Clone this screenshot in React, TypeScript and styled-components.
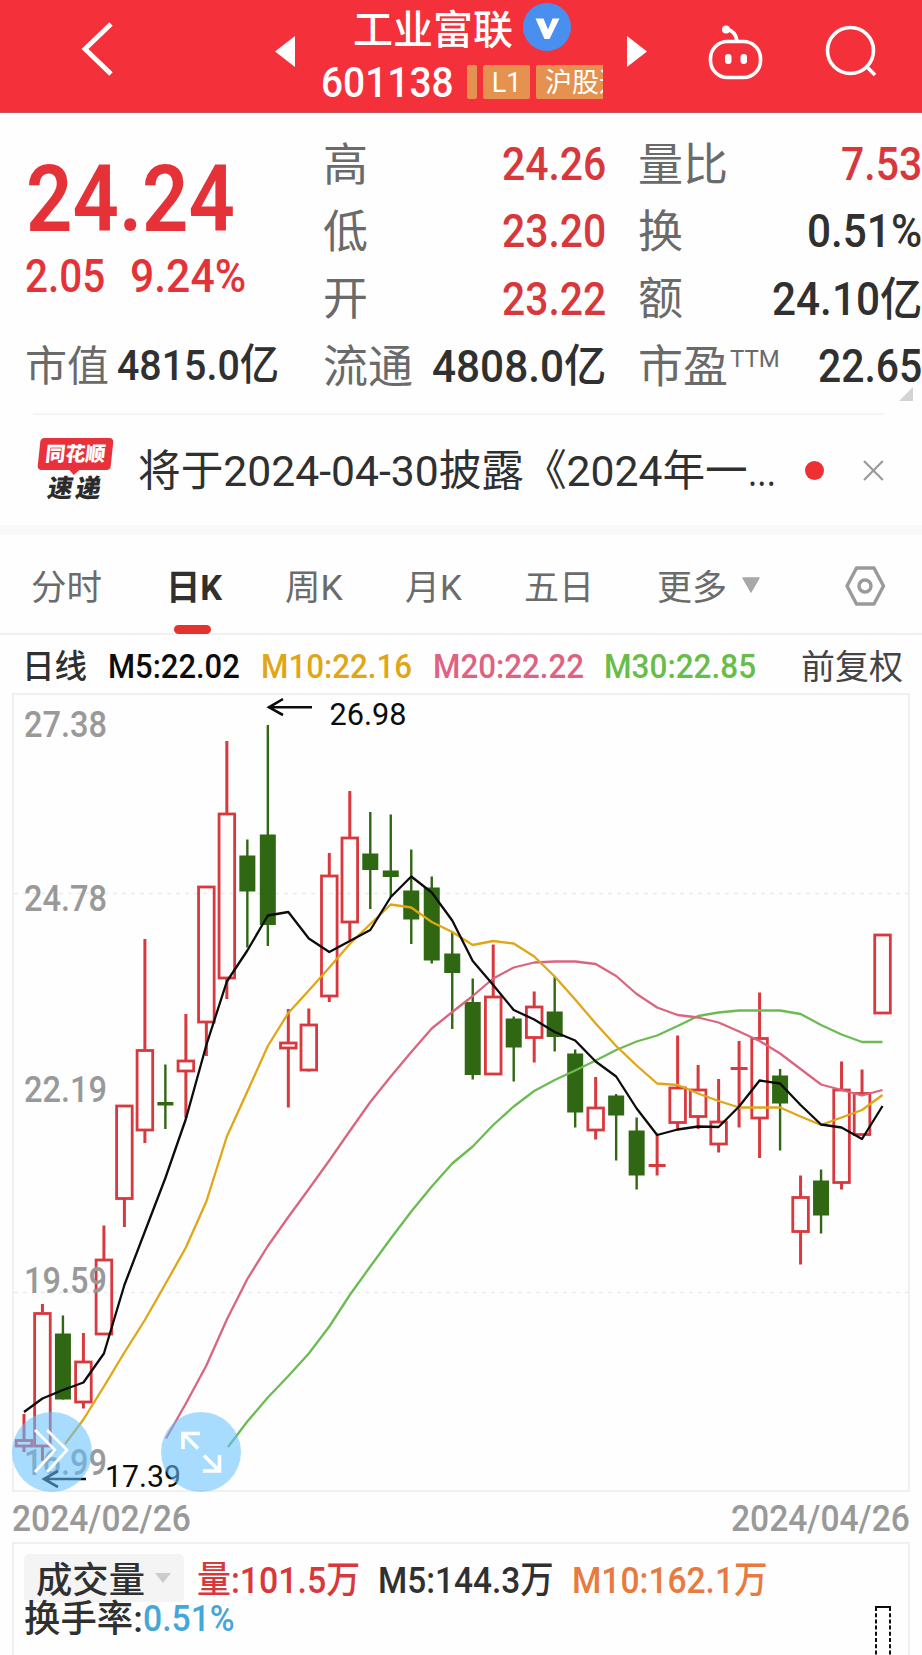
import React, { useLayoutEffect, useRef, useState } from 'react';
import styled, { createGlobalStyle } from 'styled-components';

const GlobalStyle = createGlobalStyle`
  * { box-sizing: border-box; }
  body {
    margin: 0;
    background: #fefefe;
    font-family: Roboto, "Noto Sans CJK SC", sans-serif;
    color: #303030;
  }
`;

const Page = styled.main`
  width: 922px;
  height: 1655px;
  overflow: hidden;
  background: #fefefe;
  display: flex;
  flex-direction: column;
`;

/* Text condensed or widened horizontally to fill a given width. */
const FitBox = styled.span<{ $w: number; $size: number; $weight: number; $drop: number; $color?: string }>`
  display: block;
  flex: none;
  width: ${(p) => p.$w}px;
  height: 1.2em;
  margin-top: ${(p) => p.$drop}px;
  margin-bottom: ${(p) => -p.$drop}px;
  line-height: 1.2;
  font-size: ${(p) => p.$size}px;
  font-weight: ${(p) => p.$weight};
  color: ${(p) => p.$color ?? 'inherit'};
  white-space: nowrap;
`;

const FitInner = styled.span`
  display: inline-block;
  line-height: 1.2;
  vertical-align: top;
  transform-origin: 0 50%;
`;

interface FitProps {
  w: number;
  size: number;
  weight?: number;
  drop?: number;
  color?: string;
  children: React.ReactNode;
}

function Fit({ w, size, weight = 400, drop = 0, color, children }: FitProps) {
  const ref = useRef<HTMLSpanElement>(null);
  const [scale, setScale] = useState(1);
  useLayoutEffect(() => {
    if (ref.current) setScale(w / ref.current.offsetWidth);
  }, [w, size, weight]);
  return (
    <FitBox $w={w} $size={size} $weight={weight} $drop={drop} $color={color}>
      <FitInner ref={ref} style={{ transform: `scaleX(${scale})` }}>
        {children}
      </FitInner>
    </FitBox>
  );
}

const RED = '#e53238';
const INK = '#303030';

/* ---------- header ---------- */

const Header = styled.header`
  height: 113px;
  flex: none;
  background: #f4303a;
  border-bottom: 1px solid #c9525a;
  color: #fff;
  display: flex;
  align-items: flex-start;
`;

const HeaderIcon = styled.svg<{ $ml: number; $mt: number }>`
  flex: none;
  display: block;
  margin-left: ${(p) => p.$ml}px;
  margin-top: ${(p) => p.$mt}px;
`;

const TitleBlock = styled.div`
  width: 283px;
  flex: none;
  margin-left: 25px;
`;

const TitleRow = styled.div`
  display: flex;
  align-items: center;
  height: 54px;
  padding: 0 0 0 32px;
  gap: 10px;
`;

const StockName = styled.h1`
  margin: 0;
  padding-top: 7px;
  font-size: 40px;
  line-height: 54px;
  font-weight: 500;
  white-space: nowrap;
`;

const CodeRow = styled.div`
  display: flex;
  align-items: center;
  height: 56px;
`;

const Tags = styled.div`
  display: flex;
  gap: 6px;
  margin-left: 13px;
  width: 136px;
  overflow: hidden;
`;

const Tag = styled.span<{ $w: number }>`
  flex: none;
  width: ${(p) => p.$w}px;
  height: 34px;
  line-height: 36px;
  border-radius: 2px;
  background: #e5914f;
  font-size: 27px;
  display: flex;
  justify-content: center;
  white-space: nowrap;
`;

const ClippedTag = styled(Tag)`
  border-radius: 2px 0 0 2px;
  justify-content: flex-start;
  padding-left: 9px;
  overflow: hidden;
`;

/* ---------- quote ---------- */

const Quote = styled.section`
  position: relative;
  flex: none;
  height: 300px;
  padding: 17px 0 0 25px;
  display: grid;
  grid-template-columns: 298px 315px 284px;
`;

const PriceColumn = styled.div`
  display: flex;
  flex-direction: column;
`;

const Price = styled.div`
  padding: 14px 0 0 1px;
  height: 119px;
`;

const Change = styled.div`
  display: flex;
  gap: 25px;
  height: 82px;
`;

const Column = styled.div<{ $pr: number }>`
  display: flex;
  flex-direction: column;
  padding-right: ${(p) => p.$pr}px;
`;

const Row = styled.div`
  height: 67.3px;
  display: flex;
  align-items: center;
  justify-content: space-between;
`;

const CapRow = styled(Row)`
  width: 254px;
`;

const Label = styled.span<{ $size?: number }>`
  padding-top: 4px;
  font-size: ${(p) => p.$size ?? 45}px;
  line-height: 60px;
  font-weight: 400;
  color: #6a6a6a;
  display: flex;
  white-space: nowrap;
`;

const Sup = styled.span`
  font-size: 24px;
  line-height: 43px;
  margin-left: 2px;
`;

const Corner = styled.svg`
  position: absolute;
  right: 9px;
  bottom: 12px;
`;

/* ---------- news ---------- */

const News = styled.section`
  flex: none;
  height: 112px;
  margin: 0 38px 0 33px;
  border-top: 2px solid #f4f4f4;
  display: flex;
  align-items: center;
`;

const Brand = styled.div`
  width: 76px;
  height: 64px;
  margin: 0 25px 0 5px;
  display: flex;
  flex-direction: column;
  align-items: center;
`;

const BrandTop = styled.div`
  position: relative;
  width: 73px;
  height: 32px;
  line-height: 33px;
  border-radius: 4px;
  background: #e8313a;
  color: #fff;
  font-size: 20px;
  font-weight: 900;
  text-align: center;
  transform: skewX(-6deg);
  &::after {
    content: '';
    position: absolute;
    left: 31px;
    top: 31px;
    border: 6px solid transparent;
    border-top-color: #e8313a;
    border-bottom: 0;
  }
`;

const BrandBottom = styled.div`
  font-size: 25px;
  line-height: 28px;
  margin-top: 5px;
  font-weight: 900;
  letter-spacing: 3px;
  color: #2b2b2b;
  transform: skewX(-10deg);
`;

const Dot = styled.i`
  width: 19px;
  height: 19px;
  border-radius: 50%;
  background: #ee3033;
  margin-left: 29px;
`;

const Close = styled.svg`
  display: block;
  margin-left: 39px;
`;

const Band = styled.div`
  flex: none;
  height: 10px;
  background: #f8f8f8;
`;

/* ---------- tabs ---------- */

const Tabs = styled.nav`
  flex: none;
  height: 100px;
  border-bottom: 2px solid #f0f0f0;
  display: flex;
  color: #6b6b6b;
`;

const Tab = styled.div<{ $ml: number; $active?: boolean }>`
  position: relative;
  margin-left: ${(p) => p.$ml}px;
  height: 102px;
  padding-top: 32px;
  color: ${(p) => (p.$active ? INK : 'inherit')};
  &::after {
    content: '';
    display: ${(p) => (p.$active ? 'block' : 'none')};
    position: absolute;
    left: 8px;
    top: 90px;
    width: 37px;
    height: 9px;
    border-radius: 5px;
    background: #e4322f;
  }
`;

const TabIcon = styled.svg<{ $ml: number; $mt: number }>`
  margin-left: ${(p) => p.$ml}px;
  margin-top: ${(p) => p.$mt}px;
  flex: none;
`;

/* ---------- chart ---------- */

const Legend = styled.div`
  flex: none;
  height: 58px;
  padding: 5px 0 0 22px;
  display: flex;
  align-items: center;
`;

const LegendGap = styled.i<{ $w: number }>`
  width: ${(p) => p.$w}px;
  flex: none;
`;

const ChartPane = styled.section`
  position: relative;
  flex: none;
  width: 898px;
  height: 799px;
  margin-left: 12px;
  border: 2px solid #f0f0f0;
`;

const Plot = styled.svg`
  display: block;
  margin: -2px;
  font-family: Roboto, sans-serif;
`;

const Bubble = styled.button<{ $left: number }>`
  position: absolute;
  left: ${(p) => p.$left}px;
  bottom: -2px;
  width: 80px;
  height: 80px;
  padding: 0;
  border: 0;
  border-radius: 50%;
  background: rgba(100, 193, 255, 0.56);
  svg { display: block; }
`;

const Dates = styled.div`
  flex: none;
  height: 50px;
  padding: 2px 12px 0 12px;
  display: flex;
  justify-content: space-between;
  align-items: center;
`;

const Volume = styled.section`
  flex: none;
  width: 898px;
  height: 120px;
  margin-left: 12px;
  border: 2px solid #f0f0f0;
  padding: 10px 0 0 10px;
  display: grid;
  grid-template-columns: 1fr 35px;
`;

const VolumeRow = styled.div`
  display: flex;
  align-items: center;
  height: 48px;
`;

const TurnoverRow = styled.div`
  display: flex;
  align-items: center;
  height: 34px;
`;

const Chip = styled.div`
  width: 160px;
  height: 48px;
  flex: none;
  border-radius: 5px;
  background: #f4f4f4;
  padding-left: 12px;
  display: flex;
  align-items: center;
  gap: 10px;
`;

const VolumeBar = styled.svg`
  display: block;
  margin-top: 50px;
`;

/* [rising, high, body top, body bottom, low] in the plot's vertical units */
type Candle = [boolean, number, number, number, number];
const U = true;
const D = false;
const candles: Candle[] = [
  [U, 1414, 1439.5, 1446, 1452], [U, 1304, 1312.5, 1446, 1461], [D, 1315.5, 1333.5, 1399.5, 1399.5],
  [U, 1333, 1361, 1402, 1408.5], [U, 1225.5, 1259, 1334, 1334], [U, 1105, 1105, 1198.5, 1227],
  [U, 939, 1049.5, 1130, 1143], [D, 1064.5, 1102, 1105.5, 1129], [U, 1014, 1060, 1071, 1118],
  [U, 886, 886, 1022, 1056], [U, 741, 813, 978, 999], [D, 839.5, 855.5, 891.5, 947.5],
  [D, 725, 834.5, 925, 946], [U, 1009, 1042, 1048, 1107.5], [U, 1008.5, 1024, 1070, 1071.5],
  [U, 853, 875, 996, 1002], [U, 791, 837, 922, 940], [D, 812, 853.5, 870, 909],
  [D, 814.5, 870.5, 877, 897], [D, 849.5, 890.5, 919.5, 944], [D, 876.5, 887.5, 960.5, 963.5],
  [D, 931.5, 953.5, 973, 1029], [D, 978.5, 1002, 1075, 1079.5], [U, 944.5, 996, 1074, 1074],
  [D, 1016.5, 1018.5, 1047.5, 1081.5], [U, 991.5, 1006, 1037.5, 1062.5], [D, 976.5, 1011.5, 1037, 1051.5],
  [D, 1049.5, 1053.5, 1112.5, 1127.5], [U, 1077, 1107, 1130, 1139.5], [D, 1094, 1095.5, 1115.5, 1160.5],
  [D, 1117.5, 1130.5, 1175.5, 1189.5], [U, 1135, 1165.5, 1165.5, 1175.5], [U, 1035.5, 1087, 1122.5, 1130.5],
  [U, 1065, 1089, 1116.5, 1129], [U, 1079, 1121, 1144, 1152.5], [U, 1041, 1068.5, 1068.5, 1127.5],
  [U, 992.5, 1037.5, 1118, 1158], [D, 1069, 1075.5, 1103.5, 1150.5], [U, 1175.5, 1196.5, 1231.5, 1264.5],
  [D, 1169.5, 1180.5, 1215.5, 1233.5], [U, 1061.5, 1089, 1182.5, 1189.5], [U, 1069.5, 1092.5, 1134.5, 1134.5],
  [U, 934, 934, 1013, 1014],
];

const xAt = (i: number) => (i === 0 ? 24 : 124.4 + 20.49 * (i - 5));

interface Average { color: string; from: number; head?: [number, number]; ys: number[] }
const averages: Average[] = [
  {
    color: '#6cbb52', from: 11, head: [228, 1447],
    ys: [1421.5, 1397.5, 1376, 1353.5, 1326.5, 1295, 1266.5, 1238.5, 1211.5, 1186.5, 1163.5, 1146.5, 1125, 1106.5, 1091, 1080, 1070.5, 1060.5, 1050, 1041.5, 1035.5, 1026, 1016, 1012.5, 1010.5, 1010.5, 1010.5, 1014, 1025, 1034.5, 1042, 1042],
  },
  {
    color: '#d9657f', from: 8, head: [166, 1438.5],
    ys: [1403.5, 1365.5, 1319.5, 1279, 1246, 1217, 1189, 1160.5, 1131, 1102, 1076.5, 1052, 1028.5, 1012, 996, 978.5, 967.5, 962.5, 961.5, 961.5, 964, 976, 994, 1007.5, 1015, 1017.5, 1022.5, 1031.5, 1041, 1053.5, 1069, 1084.5, 1090, 1095.5, 1090],
  },
  {
    color: '#dfa616', from: 3, head: [65, 1444],
    ys: [1419.5, 1386.5, 1352.5, 1320, 1284, 1247.5, 1201.5, 1136.5, 1091.5, 1046, 1013, 990.5, 967.5, 944, 924, 904.5, 907.5, 922, 932, 945, 941, 943.5, 956.5, 976.5, 999.5, 1023.5, 1046, 1065.5, 1083.5, 1085, 1093.5, 1101, 1107.5, 1107.5, 1107.5, 1116.5, 1125, 1117.5, 1110, 1095],
  },
  {
    color: '#0c0c0c', from: 0,
    ys: [1412, 1398.5, 1390, 1382.5, 1353.5, 1285, 1231.5, 1178, 1119, 1045, 981.5, 950.5, 915.5, 912, 938.5, 952, 941, 930, 897, 876.5, 892.5, 920.5, 961, 985, 1010, 1019.5, 1032, 1040.5, 1061.5, 1076.5, 1108.5, 1135, 1129.5, 1126.5, 1127, 1106.5, 1080.5, 1083.5, 1105, 1124.5, 1127.5, 1139, 1106],
  },
];

const axis: [string, number][] = [
  ['27.38', 737], ['24.78', 911], ['22.19', 1102], ['19.59', 1293], ['16.99', 1475],
];

function CandleShape({ i, c }: { i: number; c: Candle }) {
  const [up, high, top, bottom, low] = c;
  const x = xAt(i);
  const color = up ? '#d8393f' : '#2f6712';
  if (!up) {
    return (
      <g>
        <path d={`M${x} ${high}V${low}`} stroke={color} strokeWidth={2.4} />
        <rect x={x - 8} y={top} width={16} height={bottom - top} fill={color} />
      </g>
    );
  }
  if (top === bottom) {
    return <path d={`M${x} ${high}V${low}M${x - 8.5} ${top}h17`} stroke={color} strokeWidth={3} fill="none" />;
  }
  return (
    <g stroke={color} fill="none">
      <path d={`M${x} ${high}V${top}M${x} ${bottom}V${low}`} strokeWidth={3} />
      <rect x={x - 7.8} y={top + 1} width={15.6} height={bottom - top - 1} strokeWidth={2.8} />
    </g>
  );
}

function Chart() {
  return (
    <ChartPane>
      <Plot width={898} height={799} viewBox="12 693 898 799">
        <path d="M14 893.5H908M14 1292.5H908" stroke="#ececec" strokeWidth={1.6} strokeDasharray="4 5" />
        {candles.map((c, i) => <CandleShape key={i} i={i} c={c} />)}
        {axis.map(([t, y]) => (
          <text key={t} x={24} y={y} fontSize={36.5} fill="#999" fontWeight={500} textLength={83} lengthAdjust="spacingAndGlyphs">{t}</text>
        ))}
        {averages.map((a) => (
          <polyline
            key={a.color}
            fill="none"
            stroke={a.color}
            strokeWidth={2.3}
            strokeLinejoin="round"
            points={[...(a.head ? [a.head] : []), ...a.ys.map((y, k) => [xAt(a.from + k), y])]
              .map((p) => p.join(',')).join(' ')}
          />
        ))}
        <g stroke="#0c0c0c" strokeWidth={2.6} fill="none">
          <path d="M312 707.3H269M283 699L269 707.3L283 715" />
          <path d="M86 1479H44M58 1471L44 1479L58 1487" />
        </g>
        <g fill="#0c0c0c" fontSize={30.5}>
          <text x={329.5} y={725} textLength={77} lengthAdjust="spacingAndGlyphs">26.98</text>
          <text x={105} y={1486.5} textLength={76} lengthAdjust="spacingAndGlyphs">17.39</text>
        </g>
      </Plot>
      <Bubble $left={-2} aria-label="展开">
        <svg width="80" height="80" viewBox="0 0 80 80" fill="none" stroke="#fff" strokeWidth="2.8">
          <path d="M23 18L43 38L23 60M35 18L55 38L35 60" />
        </svg>
      </Bubble>
      <Bubble $left={146.5} aria-label="全屏">
        <svg width="80" height="80" viewBox="0 0 80 80" fill="none" stroke="#fff" strokeWidth="3.6">
          <path d="M37 36.5L22 21.5M39 21.5H22V37M43 43.5L58 58.5M42 59H58.5V43" />
        </svg>
      </Bubble>
    </ChartPane>
  );
}

export default function App() {
  return (
    <Page>
      <GlobalStyle />
      <Header>
        <HeaderIcon $ml={78} $mt={18} width="40" height="62" viewBox="0 0 40 62" fill="none" stroke="#fff" strokeWidth="4.8">
          <path d="M33 6L7 31L33 56" />
        </HeaderIcon>
        <HeaderIcon $ml={157} $mt={36} width="21" height="31" viewBox="0 0 21 31">
          <path d="M20 0V31L0 15.5Z" fill="#fff" />
        </HeaderIcon>
        <TitleBlock>
          <TitleRow>
            <StockName>工业富联</StockName>
            <svg width="48" height="50" viewBox="0 0 48 50">
              <circle cx="24" cy="25" r="24" fill="#488ff0" />
              <path d="M12.5 16.5H20.5L25 27.5L29.5 16.5H36.5L26.5 37H21.5Z" fill="#fff" />
            </svg>
          </TitleRow>
          <CodeRow>
            <Fit w={133} size={43} weight={500} drop={1}>601138</Fit>
            <Tags>
              <Tag $w={10} />
              <Tag $w={47}>L1</Tag>
              <ClippedTag $w={68}>沪股通</ClippedTag>
            </Tags>
          </CodeRow>
        </TitleBlock>
        <HeaderIcon $ml={23} $mt={36} width="21" height="31" viewBox="0 0 21 31">
          <path d="M0 0V31L20 15.5Z" fill="#fff" />
        </HeaderIcon>
        <HeaderIcon $ml={58} $mt={22} width="60" height="60" viewBox="0 0 60 60" fill="none" stroke="#fff" strokeWidth="3.6">
          <rect x="4.5" y="19.5" width="50" height="36" rx="17" />
          <path d="M20 7C26 8 30 12 31 19" />
          <circle cx="20" cy="7.5" r="4" fill="#fff" stroke="none" />
          <rect x="19" y="32" width="6.5" height="10" rx="3" fill="#fff" stroke="none" />
          <rect x="34.5" y="32" width="6.5" height="10" rx="3" fill="#fff" stroke="none" />
        </HeaderIcon>
        <HeaderIcon $ml={57} $mt={22} width="60" height="60" viewBox="0 0 60 60" fill="none" stroke="#fff" strokeWidth="3.6">
          <circle cx="27.5" cy="28.5" r="23" />
          <path d="M43.5 44.5L52 53" />
        </HeaderIcon>
      </Header>

      <Quote>
        <PriceColumn>
          <Price><Fit w={209} size={93} weight={600} color={RED}>24.24</Fit></Price>
          <Change>
            <Fit w={80} size={46} weight={500} color={RED}>2.05</Fit>
            <Fit w={116} size={46} weight={500} color={RED}>9.24%</Fit>
          </Change>
          <CapRow>
            <Label $size={42}>市值</Label>
            <Fit w={162} size={43} weight={500} drop={1}>4815.0亿</Fit>
          </CapRow>
        </PriceColumn>
        <Column $pr={32}>
          <Row><Label>高</Label><Fit w={104} size={46} weight={500} drop={1} color="#d8383c">24.26</Fit></Row>
          <Row><Label>低</Label><Fit w={104} size={46} weight={500} drop={1} color="#d8383c">23.20</Fit></Row>
          <Row><Label>开</Label><Fit w={104} size={46} weight={500} drop={1} color="#d8383c">23.22</Fit></Row>
          <Row><Label>流通</Label><Fit w={174} size={45} weight={500} drop={1}>4808.0亿</Fit></Row>
        </Column>
        <Column $pr={0}>
          <Row><Label>量比</Label><Fit w={81} size={46} weight={500} drop={1} color="#d8383c">7.53</Fit></Row>
          <Row><Label>换</Label><Fit w={115} size={46} weight={500} drop={1}>0.51%</Fit></Row>
          <Row><Label>额</Label><Fit w={150} size={46} weight={500} drop={1}>24.10亿</Fit></Row>
          <Row><Label>市盈<Sup>TTM</Sup></Label><Fit w={104} size={46} weight={500} drop={1}>22.65</Fit></Row>
        </Column>
        <Corner width="14" height="14" viewBox="0 0 14 14"><path d="M14 0V14H0Z" fill="#d4d4d4" /></Corner>
      </Quote>

      <News>
        <Brand>
          <BrandTop>同花顺</BrandTop>
          <BrandBottom>速递</BrandBottom>
        </Brand>
        <Fit w={610} size={43} drop={2}>将于2024-04-30披露《2024年一</Fit>
        <Fit w={28} size={43} drop={2}>...</Fit>
        <Dot />
        <Close width="21" height="21" viewBox="0 0 21 21" stroke="#999" strokeWidth="2.2">
          <path d="M1 1L20 20M20 1L1 20" />
        </Close>
      </News>
      <Band />

      <Tabs>
        <Tab $ml={31}><Fit w={71} size={35.5}>分时</Fit></Tab>
        <Tab $ml={64} $active><Fit w={56} size={35.5} weight={700}>日K</Fit></Tab>
        <Tab $ml={63}><Fit w={58} size={35.5}>周K</Fit></Tab>
        <Tab $ml={62}><Fit w={57} size={35.5}>月K</Fit></Tab>
        <Tab $ml={62}><Fit w={70} size={35.5}>五日</Fit></Tab>
        <Tab $ml={63}><Fit w={70} size={35.5}>更多</Fit></Tab>
        <TabIcon $ml={15} $mt={42} width="18" height="17" viewBox="0 0 18 17">
          <path d="M1 1H17L9 15Z" fill="#a8a8a8" stroke="#a8a8a8" strokeWidth="1.5" strokeLinejoin="round" />
        </TabIcon>
        <TabIcon $ml={83} $mt={29} width="44" height="44" viewBox="0 0 44 44" fill="none" stroke="#9a9a9a" strokeWidth="3.4" strokeLinejoin="round">
          <path d="M13.5 4H31L40.5 22L31 40H13.5L4 22Z" />
          <circle cx="22" cy="22" r="6" />
        </TabIcon>
      </Tabs>

      <Legend>
        <Fit w={65} size={32.5} weight={500} drop={1}>日线</Fit>
        <LegendGap $w={21} />
        <Fit w={132} size={34} weight={500} color="#0c0c0c">M5:22.02</Fit>
        <LegendGap $w={21} />
        <Fit w={151} size={34} weight={500} color="#dfa616">M10:22.16</Fit>
        <LegendGap $w={21} />
        <Fit w={151} size={34} weight={500} color="#dd6380">M20:22.22</Fit>
        <LegendGap $w={20} />
        <Fit w={152} size={34} weight={500} color="#68bd48">M30:22.85</Fit>
        <LegendGap $w={45} />
        <Fit w={102} size={34} drop={1} color="#444">前复权</Fit>
      </Legend>

      <Chart />

      <Dates>
        <Fit w={179} size={37.5} weight={500} color="#999">2024/02/26</Fit>
        <Fit w={179} size={37.5} weight={500} color="#999">2024/04/26</Fit>
      </Dates>

      <Volume>
        <div>
          <VolumeRow>
            <Chip>
              <Fit w={109} size={36} weight={500} drop={4}>成交量</Fit>
              <svg width="16" height="10" viewBox="0 0 16 10"><path d="M0 0H16L8 10Z" fill="#ccc" /></svg>
            </Chip>
            <LegendGap $w={13} />
            <Fit w={163} size={37} weight={500} drop={3} color="#d8383c">量:101.5万</Fit>
            <LegendGap $w={18} />
            <Fit w={176} size={37} weight={500} drop={3}>M5:144.3万</Fit>
            <LegendGap $w={18} />
            <Fit w={196} size={37} weight={500} drop={3} color="#e8793f">M10:162.1万</Fit>
          </VolumeRow>
          <TurnoverRow>
            <Fit w={119} size={37} weight={500} drop={1}>换手率:</Fit>
            <Fit w={92} size={37} weight={500} color="#45a6d8">0.51%</Fit>
          </TurnoverRow>
        </div>
        <VolumeBar width="20" height="60" viewBox="0 0 20 60" fill="none" stroke="#0c0c0c" strokeWidth="2">
          <path d="M17 3V60M3 3V60" strokeDasharray="4 2.2" />
          <path d="M2 3H18" />
        </VolumeBar>
      </Volume>
    </Page>
  );
}
